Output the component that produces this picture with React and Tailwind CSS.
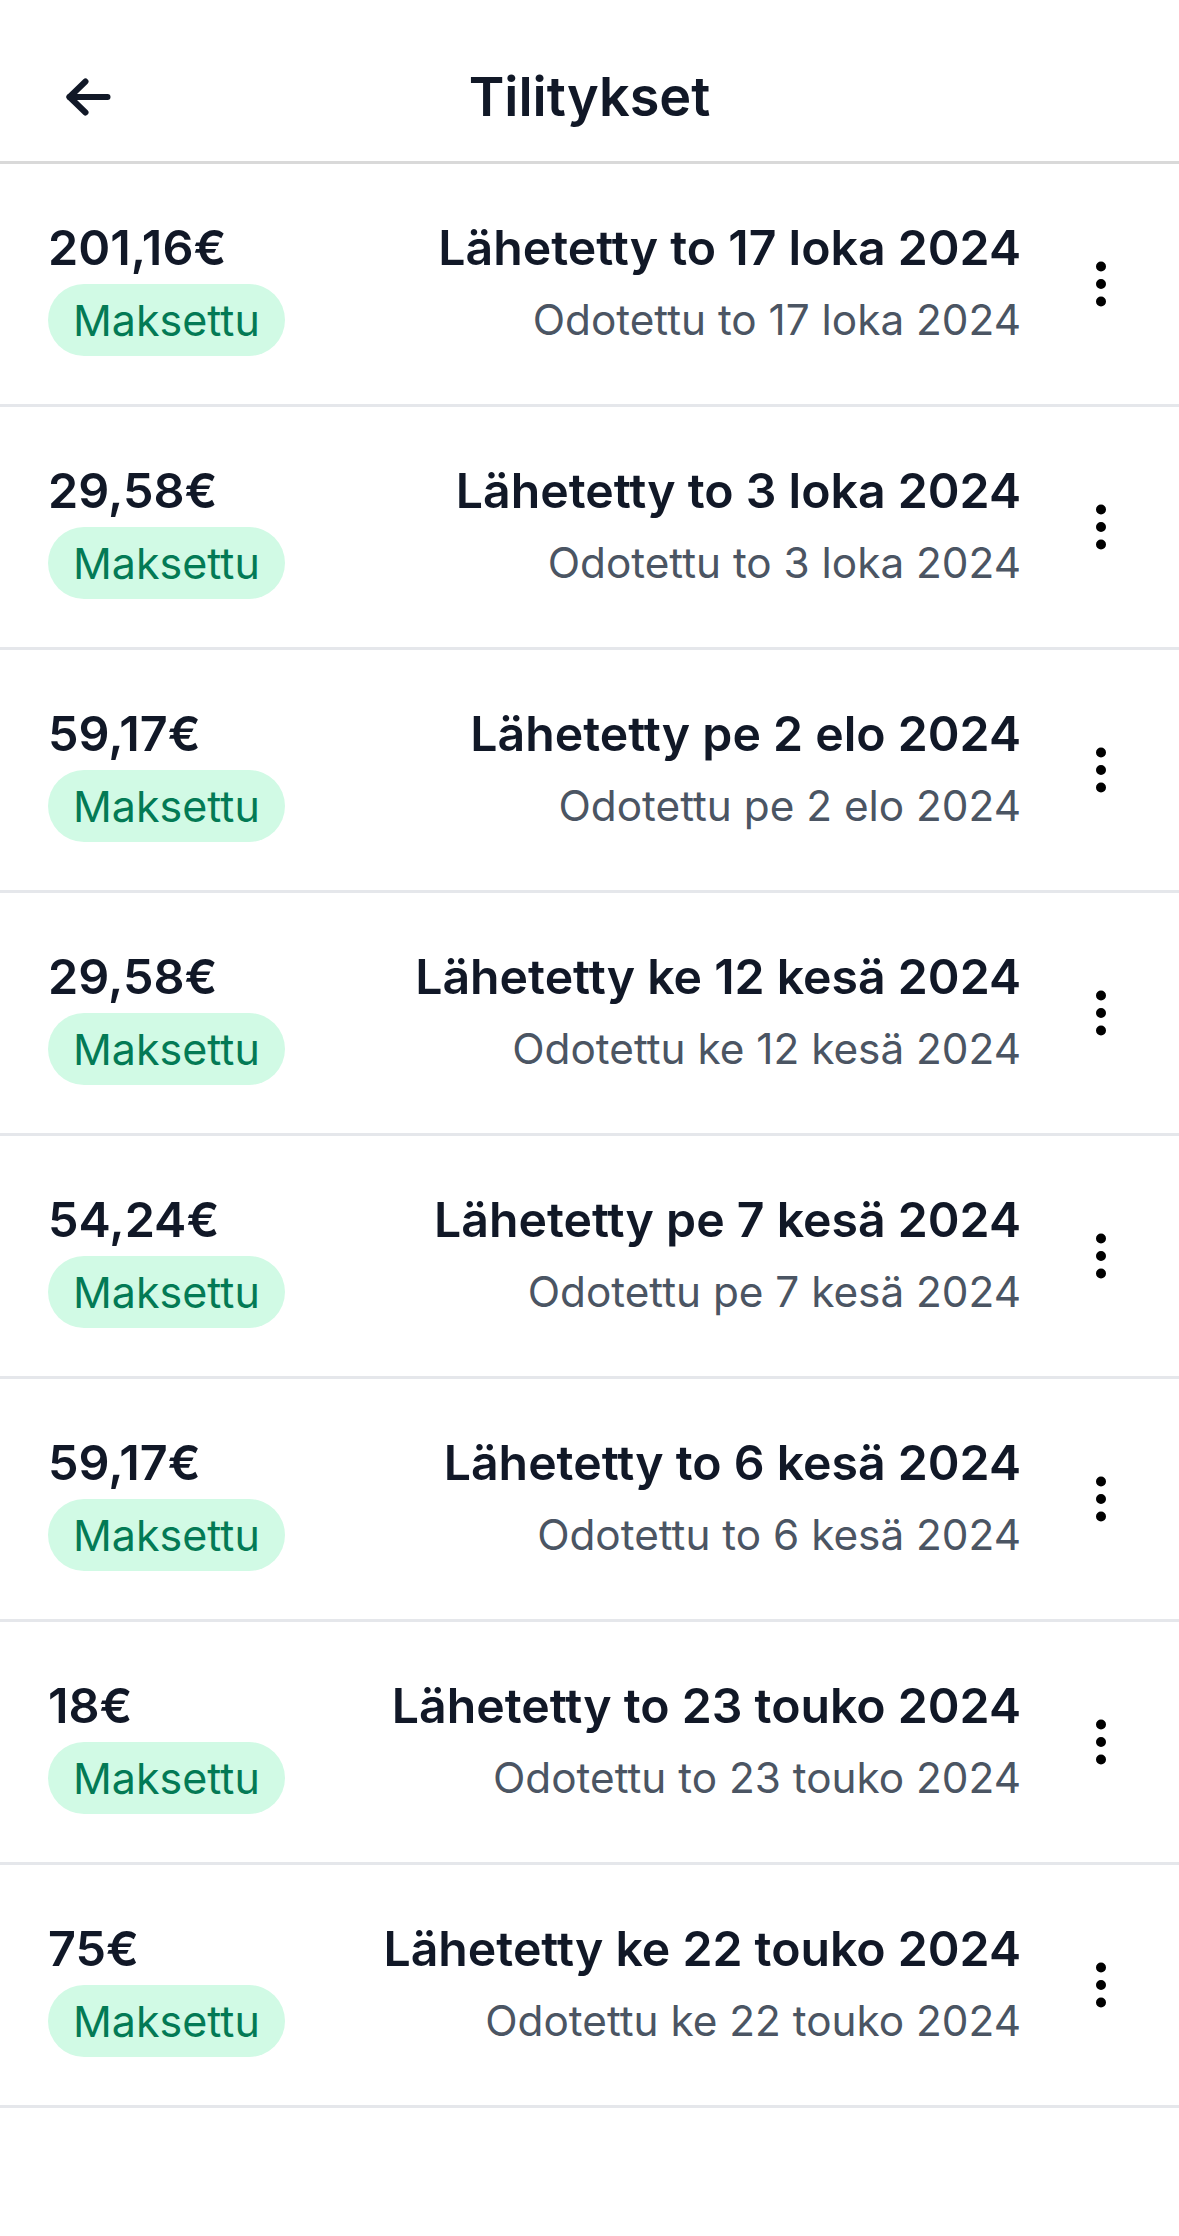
import React from 'react';

const rows = [
  { amount: '201,16€', sent: 'Lähetetty to 17 loka 2024', expected: 'Odotettu to 17 loka 2024' },
  { amount: '29,58€', sent: 'Lähetetty to 3 loka 2024', expected: 'Odotettu to 3 loka 2024' },
  { amount: '59,17€', sent: 'Lähetetty pe 2 elo 2024', expected: 'Odotettu pe 2 elo 2024' },
  { amount: '29,58€', sent: 'Lähetetty ke 12 kesä 2024', expected: 'Odotettu ke 12 kesä 2024' },
  { amount: '54,24€', sent: 'Lähetetty pe 7 kesä 2024', expected: 'Odotettu pe 7 kesä 2024' },
  { amount: '59,17€', sent: 'Lähetetty to 6 kesä 2024', expected: 'Odotettu to 6 kesä 2024' },
  { amount: '18€', sent: 'Lähetetty to 23 touko 2024', expected: 'Odotettu to 23 touko 2024' },
  { amount: '75€', sent: 'Lähetetty ke 22 touko 2024', expected: 'Odotettu ke 22 touko 2024' },
];

const BackArrow = () => (
  <svg width="45" height="38" viewBox="0 0 45 38" fill="none" stroke="#111827" strokeWidth="6" strokeLinecap="round" strokeLinejoin="round">
    <path d="M3.5 19H41.5" />
    <path d="M19.5 3.5L3.5 19L19.5 34.5" />
  </svg>
);

const MoreIcon = () => (
  <svg width="60" height="60" viewBox="0 0 24 24" fill="#000" stroke="#000" strokeWidth="2">
    <circle cx="12" cy="5" r="1" />
    <circle cx="12" cy="12" r="1" />
    <circle cx="12" cy="19" r="1" />
  </svg>
);

// Yksi tilitysrivi
const PayoutRow = ({ row }) => (
  <div className="flex items-center px-[48px] py-[48px] border-b-[3px] border-[#e5e7eb]">
    <div className="flex flex-col items-start">
      <div className="text-[48.5px] leading-[72px] font-semibold text-[#111827]">{row.amount}</div>
      <span className="rounded-full bg-[#d1fae5] px-[25px] py-[6px] text-[43px] leading-[60px] text-[#037a55]">
        Maksettu
      </span>
    </div>
    <div className="flex-1 flex flex-col items-end text-right">
      <div className="text-[48.2px] leading-[72px] font-semibold text-[#111827] whitespace-nowrap">{row.sent}</div>
      <div className="text-[42.3px] leading-[72px] text-[#4b5563] whitespace-nowrap">{row.expected}</div>
    </div>
    <div className="ml-[50px] flex items-center">
      <MoreIcon />
    </div>
  </div>
);

export default function App() {
  return (
    <div className="min-h-[2236px] w-[1179px] bg-white font-['Inter',sans-serif]">
      <header className="grid grid-cols-[1fr_auto_1fr] items-start h-[164px] pt-[61px] border-b-[3px] border-[#d9d9d9]">
        <div className="pl-[66px] mt-[17px] flex">
          <BackArrow />
        </div>
        <h1 className="text-[54px] leading-[72px] font-semibold text-[#111827]">Tilitykset</h1>
        <div />
      </header>
      {rows.map((row, i) => (
        <PayoutRow key={i} row={row} />
      ))}
    </div>
  );
}
